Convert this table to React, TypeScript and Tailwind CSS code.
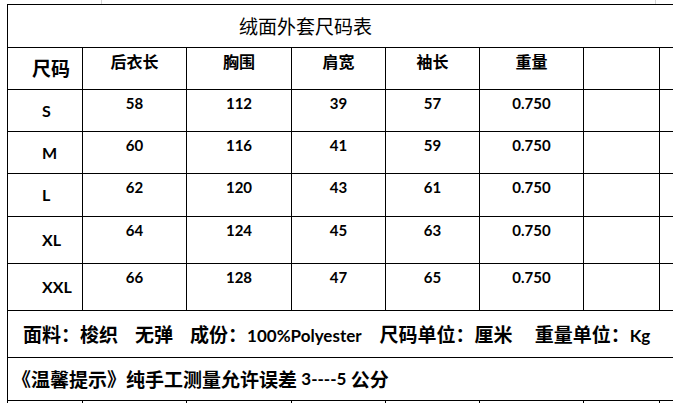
import React from "react";

const cjk = "font-['Noto_Sans_CJK_SC',sans-serif]";
const latin = "font-['Lato','Noto_Sans_CJK_SC',sans-serif] font-bold";
const cols = "grid grid-cols-[75px_104px_105px_94px_94px_104px_76px_1fr]";
const cell = "border-r border-b border-black";

const rows = [
  { size: "S", vals: ["58", "112", "39", "57", "0.750"], h: "h-[42px]" },
  { size: "M", vals: ["60", "116", "41", "59", "0.750"], h: "h-[42px]" },
  { size: "L", vals: ["62", "120", "43", "61", "0.750"], h: "h-[43px]" },
  { size: "XL", vals: ["64", "124", "45", "63", "0.750"], h: "h-[47px]" },
  { size: "XXL", vals: ["66", "128", "47", "65", "0.750"], h: "h-[47px]" },
];

const headers = ["后衣长", "胸围", "肩宽", "袖长", "重量"];

function L({ children, size = "text-[17px]" }: { children: React.ReactNode; size?: string }) {
  return <span className={`${latin} ${size}`}>{children}</span>;
}

export default function App() {
  return (
    <div className="w-[673px] h-[403px] overflow-hidden bg-white text-black">
      {/* sheet gridlines peeking above the table */}
      <div className="h-[4px] grid grid-cols-[102px_554px_1fr]">
        <div className="border-r border-[#d4d4d4]" />
        <div className="border-r border-[#d4d4d4]" />
        <div />
      </div>

      <div className={`ml-[7px] w-[760px] border-l border-t border-black ${cjk}`}>
        {/* title */}
        <div className="h-[43px] border-b border-black flex items-center pl-[231px] text-[19px]">
          绒面外套尺码表
        </div>

        {/* header */}
        <div className={`${cols} h-[42px]`}>
          <div className={`${cell} flex items-center pl-[24px] text-[19px] font-semibold`}>尺码</div>
          {headers.map((h) => (
            <div key={h} className={`${cell} flex justify-center items-start pt-[1px] text-[16px] font-semibold`}>
              {h}
            </div>
          ))}
          <div className={cell} />
          <div className={cell} />
        </div>

        {/* data */}
        {rows.map((r) => (
          <div key={r.size} className={`${cols} ${r.h}`}>
            <div className={`${cell} flex items-center pl-[34px] ${latin} text-[16px]`}>{r.size}</div>
            {r.vals.map((v, i) => (
              <div key={i} className={`${cell} flex justify-center items-start pt-[2px] ${latin} text-[15px]`}>
                {v}
              </div>
            ))}
            <div className={cell} />
            <div className={cell} />
          </div>
        ))}

        {/* notes */}
        <div className="h-[47px] border-b border-black flex items-center pl-[15px] text-[19px] font-semibold whitespace-pre">
          <span>面料：梭织</span>
          <span className="ml-[17px]">无弹</span>
          <span className="ml-[17px]">
            成份：<L>100%Polyester</L>
          </span>
          <span className="ml-[18px]">尺码单位：厘米</span>
          <span className="ml-[22px]">
            重量单位：<L>Kg</L>
          </span>
        </div>
        <div className="h-[43px] border-b border-black flex items-center pl-[4px] text-[19px] font-semibold whitespace-pre">
          《温馨提示》纯手工测量允许误差 <L>3----5</L> 公分
        </div>

        <div className={`${cols} h-[30px]`}>
          {Array.from({ length: 8 }).map((_, i) => (
            <div key={i} className={cell} />
          ))}
        </div>
      </div>
    </div>
  );
}
